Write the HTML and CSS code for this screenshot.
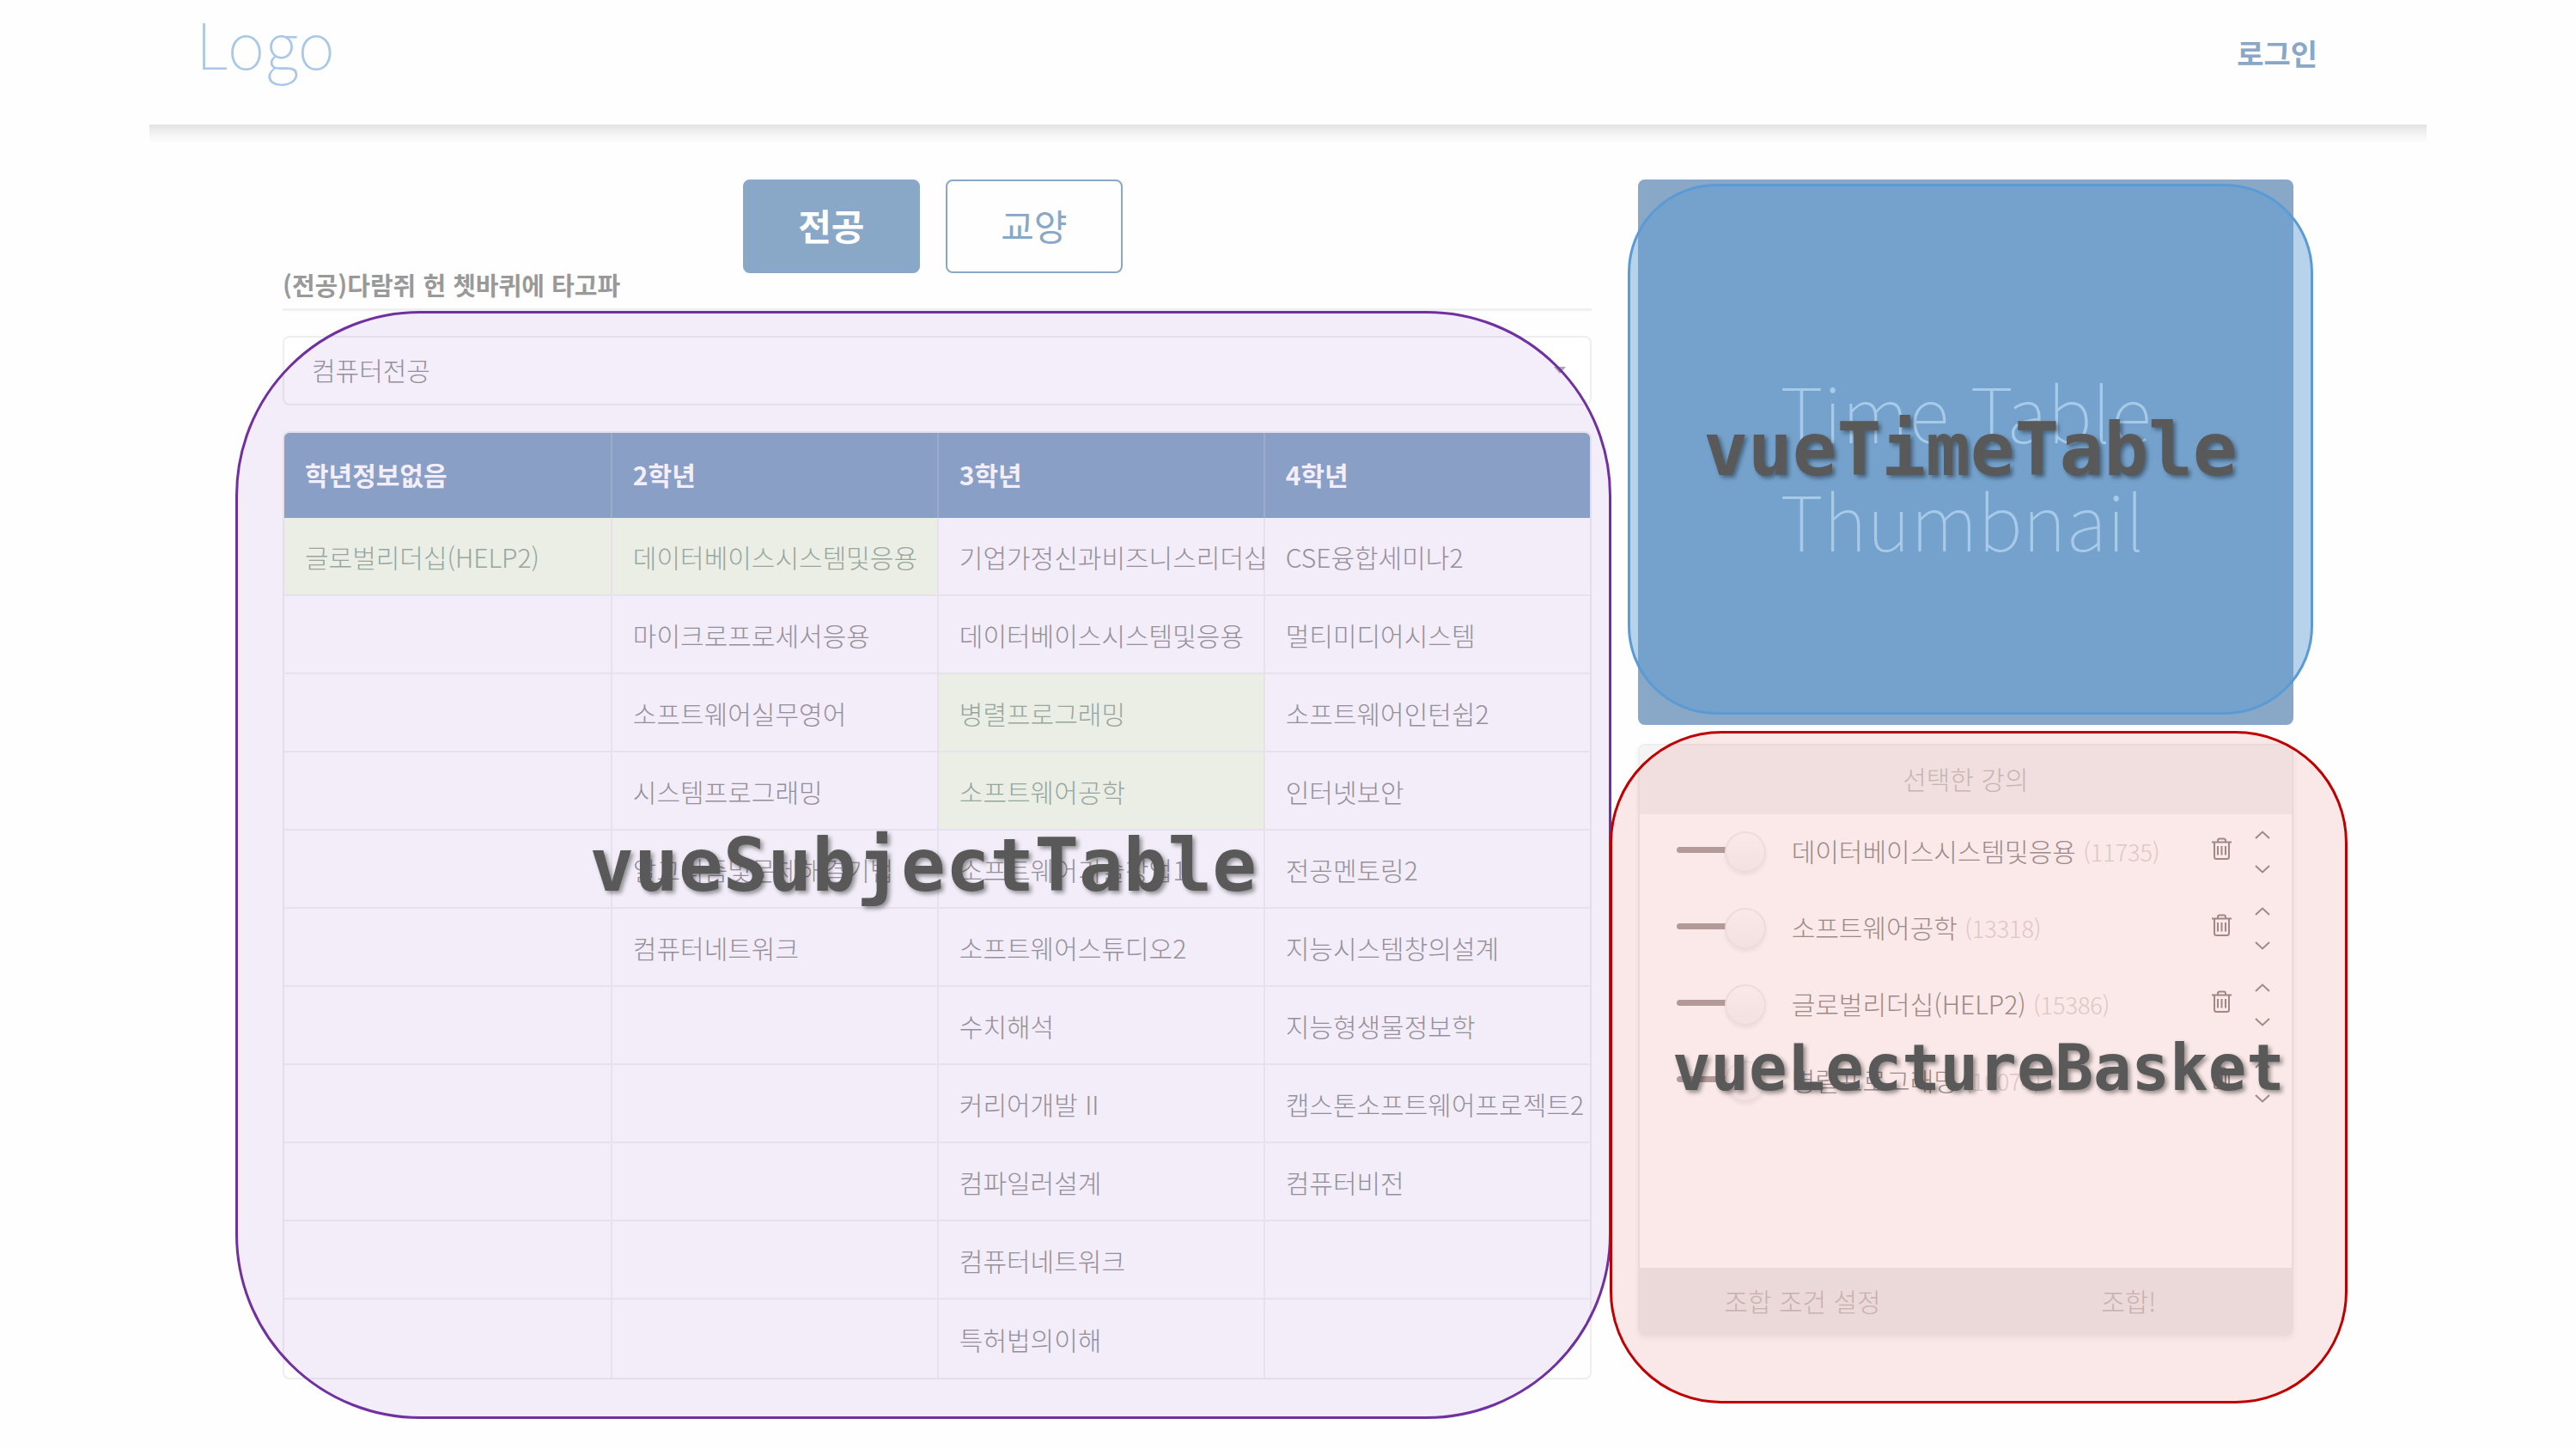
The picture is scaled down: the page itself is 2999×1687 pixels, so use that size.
FILE: index.html
```html
<!DOCTYPE html>
<html lang="ko">
<head>
<meta charset="utf-8">
<meta name="viewport" content="width=device-width, initial-scale=1">
<title>Logo</title>
<link rel="stylesheet" href="styles.css">
</head>
<body>
<svg class="sprite" aria-hidden="true">
  <symbol id="trash" viewBox="0 0 23 26">
    <path d="M0 5.500H23M7 5.500V3.500Q7 1.500 9 1.500H14Q16 1.500 16 3.500V5.500M3 5.500V22.500Q3 25 5.500 25H17.500Q20 25 20 22.500V5.500M7 10V20.500M11.500 10V20.500M16 10V20.500"/>
  </symbol>
  <symbol id="up" viewBox="0 0 18 10"><path d="M1 9L9 1.500L17 9"/></symbol>
  <symbol id="down" viewBox="0 0 18 10"><path d="M1 1L9 8.500L17 1"/></symbol>
</svg>
<div class="page">
  <header class="topbar">
    <a class="logo" href="#">Logo</a>
    <a class="login" href="#">로그인</a>
  </header>
  <main class="content">
    <div class="subjects">
      <nav class="tabs">
        <button class="tab tab-active" type="button">전공</button>
        <button class="tab" type="button">교양</button>
      </nav>
      <h1 class="title">(전공)다람쥐 헌 쳇바퀴에 타고파</h1>
      <section class="subject-panel">
        <div class="major">
          <select class="major-select" aria-label="전공 선택"><option>컴퓨터전공</option></select>
          <span class="caret"></span>
        </div>
        <table class="subject-table">
          <thead>
            <tr><th>학년정보없음</th><th>2학년</th><th>3학년</th><th>4학년</th></tr>
          </thead>
          <tbody>
            <tr><td class="picked">글로벌리더십(HELP2)</td><td class="picked">데이터베이스시스템및응용</td><td>기업가정신과비즈니스리더십</td><td>CSE융합세미나2</td></tr>
            <tr><td></td><td>마이크로프로세서응용</td><td>데이터베이스시스템및응용</td><td>멀티미디어시스템</td></tr>
            <tr><td></td><td>소프트웨어실무영어</td><td class="picked">병렬프로그래밍</td><td>소프트웨어인턴쉽2</td></tr>
            <tr><td></td><td>시스템프로그래밍</td><td class="picked">소프트웨어공학</td><td>인터넷보안</td></tr>
            <tr><td></td><td>알고리즘및문제해결기법</td><td>소프트웨어기술창업1</td><td>전공멘토링2</td></tr>
            <tr><td></td><td>컴퓨터네트워크</td><td>소프트웨어스튜디오2</td><td>지능시스템창의설계</td></tr>
            <tr><td></td><td></td><td>수치해석</td><td>지능형생물정보학</td></tr>
            <tr><td></td><td></td><td>커리어개발 II</td><td>캡스톤소프트웨어프로젝트2</td></tr>
            <tr><td></td><td></td><td>컴파일러설계</td><td>컴퓨터비전</td></tr>
            <tr><td></td><td></td><td>컴퓨터네트워크</td><td></td></tr>
            <tr><td></td><td></td><td>특허법의이해</td><td></td></tr>
          </tbody>
        </table>
        <div class="region region-subject"><span class="region-name">vueSubjectTable</span></div>
      </section>
    </div>
    <aside class="side">
      <section class="thumbnail">
        <p class="thumbnail-text">Time Table<br>Thumbnail</p>
        <div class="region region-time"><span class="region-name">vueTimeTable</span></div>
      </section>
      <section class="basket">
        <div class="basket-card">
          <h2 class="basket-head">선택한 강의</h2>
          <ul class="lectures">
            <li class="lecture">
              <input class="switch" type="checkbox" checked id="l1">
              <label class="name" for="l1">데이터베이스시스템및응용 <small class="code">(11735)</small></label>
              <button class="icon remove" type="button" aria-label="삭제"><svg class="trash"><use href="#trash"/></svg></button>
              <div class="order"><button class="icon" type="button" aria-label="위로"><svg class="chevron"><use href="#up"/></svg></button><button class="icon" type="button" aria-label="아래로"><svg class="chevron"><use href="#down"/></svg></button></div>
            </li>
            <li class="lecture">
              <input class="switch" type="checkbox" checked id="l2">
              <label class="name" for="l2">소프트웨어공학 <small class="code">(13318)</small></label>
              <button class="icon remove" type="button" aria-label="삭제"><svg class="trash"><use href="#trash"/></svg></button>
              <div class="order"><button class="icon" type="button" aria-label="위로"><svg class="chevron"><use href="#up"/></svg></button><button class="icon" type="button" aria-label="아래로"><svg class="chevron"><use href="#down"/></svg></button></div>
            </li>
            <li class="lecture">
              <input class="switch" type="checkbox" checked id="l3">
              <label class="name" for="l3">글로벌리더십(HELP2) <small class="code">(15386)</small></label>
              <button class="icon remove" type="button" aria-label="삭제"><svg class="trash"><use href="#trash"/></svg></button>
              <div class="order"><button class="icon" type="button" aria-label="위로"><svg class="chevron"><use href="#up"/></svg></button><button class="icon" type="button" aria-label="아래로"><svg class="chevron"><use href="#down"/></svg></button></div>
            </li>
            <li class="lecture">
              <input class="switch" type="checkbox" checked id="l4">
              <label class="name" for="l4">병렬프로그래밍 <small class="code">(10074)</small></label>
              <button class="icon remove" type="button" aria-label="삭제"><svg class="trash"><use href="#trash"/></svg></button>
              <div class="order"><button class="icon" type="button" aria-label="위로"><svg class="chevron"><use href="#up"/></svg></button><button class="icon" type="button" aria-label="아래로"><svg class="chevron"><use href="#down"/></svg></button></div>
            </li>
          </ul>
          <div class="basket-foot">
            <button class="foot-button" type="button">조합 조건 설정</button>
            <button class="foot-button" type="button">조합!</button>
          </div>
        </div>
        <div class="region region-basket"><span class="region-name">vueLectureBasket</span></div>
      </section>
    </aside>
  </main>
</div>
</body>
</html>
```
FILE: styles.css
```css
* { box-sizing: border-box; }

body {
  margin: 0;
  background: #fefefe;
  color: #969696;
  font-family: "Noto Sans CJK KR", "Noto Sans", sans-serif;
  font-size: 30px;
  font-weight: 300;
  line-height: 44px;
}

button, select { font: inherit; color: inherit; }
button { padding: 0; border: 0; background: none; }
.sprite { display: none; }

.page { width: 88.4%; margin: 0 auto; }

.topbar {
  position: relative;
  display: flex;
  justify-content: space-between;
  height: 145px;
  padding: 0 127px 0 54px;
}
.topbar::after {
  content: "";
  position: absolute;
  top: 100%;
  left: 0;
  right: 0;
  height: 22px;
  background: linear-gradient(#e2e2e2, #f3f3f3 50%, #fefefe);
}
.logo {
  color: #a9c8e8;
  font-size: 74px;
  font-weight: 100;
  line-height: 98px;
  text-decoration: none;
}
.login {
  padding-top: 40px;
  color: #89a7c6;
  font-size: 34px;
  font-weight: 700;
  text-decoration: none;
}

.content {
  display: grid;
  grid-template-columns: minmax(0, 1523fr) minmax(0, 763fr);
  column-gap: 54px;
  align-items: start;
  padding: 64px 155px 80px;
}

.tabs { display: flex; justify-content: center; gap: 30px; padding-right: 10px; }
.tab {
  width: 206px;
  height: 109px;
  padding-bottom: 4px;
  border: 2px solid #89a7c6;
  border-radius: 8px;
  color: #89a7c6;
  font-size: 42px;
  font-weight: 400;
}
.tab-active { background: #89a7c6; color: #fff; font-weight: 700; }

.title {
  margin: 0;
  padding-bottom: 15px;
  border-bottom: 3px solid #f0f0f0;
  color: #999;
  font-size: 29px;
  font-weight: 700;
  line-height: 26px;
}

.subject-panel { position: relative; padding-top: 29px; }
.major { position: relative; margin-bottom: 30px; }
.major-select {
  display: block;
  width: 100%;
  height: 81px;
  padding: 0 32px 3px;
  border: 2px solid #eee;
  border-radius: 8px;
  background: #fff;
  appearance: none;
}
.caret {
  position: absolute;
  top: 36px;
  right: 30px;
  border: 7px solid transparent;
  border-top: 8px solid #aaa;
  border-bottom: 0;
}

.subject-table {
  width: 100%;
  table-layout: fixed;
  border: 2px solid #eee;
  border-radius: 8px;
  border-spacing: 0;
  overflow: hidden;
  white-space: nowrap;
}
.subject-table th {
  height: 99px;
  padding: 0 24px 3px;
  background: #89a7c6;
  color: #fff;
  font-weight: 700;
  text-align: left;
}
.subject-table td {
  height: 91px;
  padding: 0 0 0 24px;
  border-bottom: 2px solid #f1f1f1;
}
.subject-table tr:last-child td { border-bottom: 0; }
.subject-table td + td { border-left: 2px solid #f1f1f1; }
.subject-table th + th { border-left: 2px solid #9cb6cf; }
.subject-table .picked { background: #f7ffe9; color: #98b09b; }

.thumbnail {
  position: relative;
  display: flex;
  align-items: center;
  justify-content: center;
  height: 635px;
  margin-bottom: 22px;
  border-radius: 8px;
  background: #89a7c6;
}
.thumbnail-text {
  margin: 0;
  padding-top: 28px;
  color: #e2eef8;
  font-size: 88px;
  font-weight: 100;
  line-height: 126px;
}

.basket { position: relative; }
.basket-card {
  border: 2px solid #eee;
  border-radius: 8px;
  background: #fff;
  box-shadow: 0 3px 6px rgba(0, 0, 0, 0.06);
  overflow: hidden;
}
.basket-head {
  margin: 0;
  padding-bottom: 4px;
  background: #f4f4f4;
  color: #c8c4c4;
  font-size: 30px;
  font-weight: 300;
  line-height: 76px;
  text-align: center;
}
.lectures {
  min-height: 528px;
  margin: 0;
  padding: 0;
  list-style: none;
}
.lecture {
  display: flex;
  align-items: center;
  height: 89px;
  padding: 0 25px 2px 43px;
}
.switch {
  position: relative;
  width: 104px;
  height: 44px;
  margin: 0 30px 4px 0;
  appearance: none;
}
.switch::before {
  content: "";
  position: absolute;
  top: 18px;
  left: 0;
  width: 64px;
  height: 7px;
  border-radius: 4px;
  background: #b0a8a8;
}
.switch::after {
  content: "";
  position: absolute;
  top: 0;
  right: 0;
  width: 44px;
  height: 44px;
  border: 2px solid #f0f0f0;
  border-radius: 50%;
  background: linear-gradient(#fefefe, #f7f7f7);
  box-shadow: 0 3px 4px rgba(0, 0, 0, 0.06);
}
.name { flex: 1; padding-bottom: 2px; white-space: nowrap; }
.code { color: #e0d8d8; font-size: 27px; }
.icon { display: block; line-height: 0; }
.icon svg { display: block; fill: none; stroke: #9c9494; stroke-width: 2; }
.remove { margin-bottom: 7px; }
.trash { width: 23px; height: 26px; }
.chevron { width: 18px; height: 10px; }
.order { display: grid; gap: 30px; margin-left: 27px; }
.basket-foot { display: grid; grid-template-columns: 1fr 1fr; background: #eee; }
.foot-button { height: 77px; padding-bottom: 2px; color: #c8c0c0; }

/* Component outlines drawn over the page */
.region {
  position: absolute;
  display: flex;
  align-items: center;
  justify-content: center;
  border: 3px solid;
  pointer-events: none;
}
.region-name {
  color: #595959;
  font-family: "DejaVu Sans Mono", "Liberation Mono", monospace;
  font-size: 86px;
  font-weight: 700;
  line-height: 120px;
  text-shadow: 3px 3px 5px rgba(0, 0, 0, 0.4);
}
.region-subject {
  inset: 0 -23px -46px -55px;
  border-color: #7030a0;
  border-radius: 215px;
  background: rgba(140, 85, 195, 0.1);
}
.region-time {
  inset: 5px -23px 12px -12px;
  border-color: #5b9bd5;
  border-radius: 103px;
  background: rgba(91, 155, 213, 0.43);
}
.region-basket {
  inset: -15px -63px -79px -33px;
  border-color: #c00000;
  border-radius: 130px;
  background: rgba(210, 40, 30, 0.1);
}
.region-basket .region-name { font-size: 74px; }
```
